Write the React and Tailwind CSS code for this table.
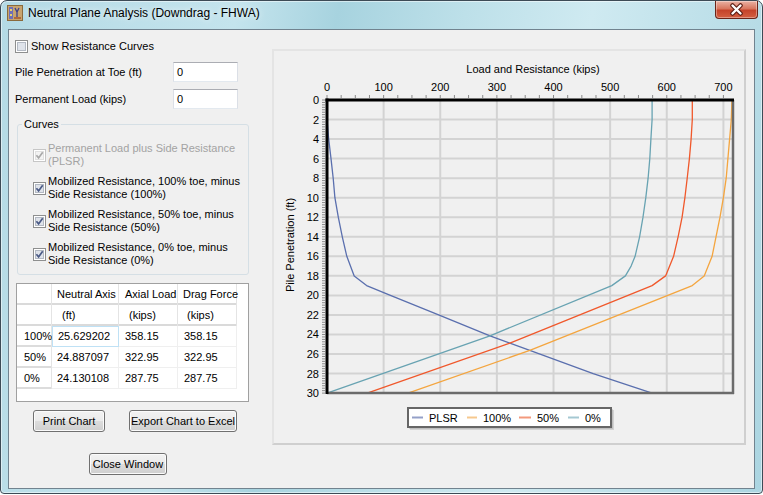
import React from 'react';

// chart helpers: coordinates are relative to the chart panel's inner box
const X = (v) => 53 + v * 0.5663;
const Y = (d) => 49 + d * 9.77;
const toPoints = (arr) => arr.map(([d, v]) => `${X(v).toFixed(1)},${Y(d).toFixed(1)}`).join(' ');

const series = [
  {
    name: 'PLSR',
    color: '#5a6fae',
    data: [[0, 0], [2, 0], [4, 3], [6, 7], [8, 11], [10, 14], [12, 20], [14, 27], [16, 35], [18, 48], [19, 70], [20, 112], [22, 197], [24.13, 287.75], [24.887, 322.95], [25.629, 358.15], [28, 470], [30, 574]],
  },
  {
    name: '100%',
    color: '#f4a53f',
    data: [[0, 715], [2, 714], [4, 711], [6, 708], [8, 705], [10, 700], [12, 694], [14, 687], [16, 680], [18, 666], [19, 645], [25.629, 358.15], [30, 143]],
  },
  {
    name: '50%',
    color: '#f0582b',
    data: [[0, 645], [2, 645], [4, 643], [6, 640], [8, 636], [10, 632], [12, 627], [14, 620], [16, 612], [18, 598], [19, 574], [24.887, 322.95], [30, 71]],
  },
  {
    name: '0%',
    color: '#68a3b2',
    data: [[0, 574], [2, 574], [4, 572], [6, 570], [8, 567], [10, 563], [12, 558], [14, 552], [16, 544], [17, 537], [18, 527], [19, 503], [24.13, 287.75], [30, 0]],
  },
];

const legendItems = [
  { name: 'PLSR', x1: 138, x2: 149, tx: 155, color: '#94a0c8' },
  { name: '100%', x1: 193, x2: 203, tx: 209, color: '#f6c88e' },
  { name: '50%', x1: 245, x2: 257, tx: 263, color: '#f3997c' },
  { name: '0%', x1: 294, x2: 305, tx: 311, color: '#a5c8d2' },
];

const rows = [
  { label: '100%', axis: '25.629202', load: '358.15', drag: '358.15', selected: true },
  { label: '50%', axis: '24.887097', load: '322.95', drag: '322.95' },
  { label: '0%', axis: '24.130108', load: '287.75', drag: '287.75' },
];

const CheckBox = ({ checked, disabled }) => (
  <svg width="13" height="13" viewBox="0 0 13 13" className="shrink-0">
    <rect x="0.5" y="0.5" width="12" height="12" fill="#fff" stroke={disabled ? '#c6c6c6' : '#8e8f8f'} />
    <rect x="2.5" y="2.5" width="8" height="8" fill={disabled ? '#f3f3f3' : '#dfe3ea'} stroke={disabled ? '#e0e0e0' : '#b3b9c3'} />
    {checked && (
      <path d="M3.4 6.2 L5.6 8.9 L9.7 3.3" fill="none" stroke={disabled ? '#a8a8a8' : '#4a5a86'} strokeWidth="1.7" />
    )}
  </svg>
);

const Button = ({ children, className }) => (
  <button
    className={`h-[22px] rounded-[3px] border border-[#707070] bg-[linear-gradient(#f2f2f2_0%,#ebebeb_50%,#dddddd_50%,#cfcfcf_100%)] shadow-[inset_0_0_0_1px_#fbfbfb] text-[11px] leading-[20px] text-black ${className}`}
  >
    {children}
  </button>
);

const AppIcon = () => (
  <svg width="16" height="16" viewBox="0 0 16 16" className="ml-[6px] mt-[4px] shrink-0">
    <rect x="0.5" y="0.5" width="15" height="15" fill="#c8a46e" stroke="#8a6a3c" />
    <rect x="2" y="2" width="4" height="12" fill="#6f6fb8" />
    <rect x="3" y="4" width="2" height="2" fill="#e9d36a" />
    <rect x="3" y="9" width="2" height="2" fill="#e9d36a" />
    <path d="M8 3 L10 7 L12 3 M10 7 L10 13" fill="none" stroke="#3b3f8f" strokeWidth="1.3" />
    <rect x="7" y="12" width="7" height="2" fill="#b06a3a" />
  </svg>
);

const CloseButton = () => (
  <div className="ml-auto mr-[4px] w-[43px] h-[18px] rounded-b-[4px] border border-t-0 border-[#6b2418] bg-[linear-gradient(#eab2a4_0%,#d8775f_45%,#c5432a_55%,#d45f41_100%)] shadow-[inset_0_0_0_1px_rgba(255,255,255,0.35)] flex items-center justify-center">
    <svg width="15" height="13" viewBox="0 0 15 13">
      <path d="M3.5 2.5 L11.5 10.5 M11.5 2.5 L3.5 10.5" stroke="#5a1a10" strokeWidth="4.5" strokeLinecap="round" />
      <path d="M3.5 2.5 L11.5 10.5 M11.5 2.5 L3.5 10.5" stroke="#ffffff" strokeWidth="2.4" strokeLinecap="round" />
    </svg>
  </div>
);

const Chart = () => {
  const gridX = [100, 200, 300, 400, 500, 600, 700];
  const gridY = [2, 4, 6, 8, 10, 12, 14, 16, 18, 20, 22, 24, 26, 28];
  const labelsY = [0, ...gridY, 30];
  const topTicks = Array.from({ length: 29 }, (_, i) => i * 25);
  const leftTicks = Array.from({ length: 121 }, (_, i) => i * 0.25);
  const right = 459;
  const bottom = Y(30);

  return (
    <svg width="470" height="392" viewBox="0 0 470 392" fontFamily="'Liberation Sans', Arial, sans-serif" fontSize="11">
      {/* grid */}
      {gridX.map((v) => (
        <line key={`gx${v}`} x1={X(v)} x2={X(v)} y1={Y(0)} y2={bottom} stroke="#d3d3d3" strokeWidth="2" />
      ))}
      {gridY.map((d) => (
        <line key={`gy${d}`} x1={X(0)} x2={right} y1={Y(d)} y2={Y(d)} stroke="#d3d3d3" strokeWidth="2" />
      ))}

      {/* minor ticks */}
      {topTicks.map((v) => (
        <line key={`tt${v}`} x1={X(v)} x2={X(v)} y1={Y(0) - 5} y2={Y(0) - 2} stroke="#8a8a8a" strokeWidth="1" />
      ))}
      {leftTicks.map((d) => (
        <line key={`lt${d}`} x1={X(0) - 5} x2={X(0) - 2} y1={Y(d)} y2={Y(d)} stroke="#8a8a8a" strokeWidth="1" />
      ))}

      {/* curves */}
      {series.map((s) => (
        <polyline key={s.name} points={toPoints(s.data)} fill="none" stroke={s.color} strokeWidth="1.3" strokeLinejoin="round" />
      ))}

      {/* plot frame */}
      <line x1={X(0)} x2={right + 1} y1={bottom} y2={bottom} stroke="#6b6b6b" strokeWidth="2.5" />
      <line x1={right} x2={right} y1={Y(0)} y2={bottom + 1} stroke="#6b6b6b" strokeWidth="2.5" />
      <line x1={X(0) - 1.5} x2={right + 1} y1={Y(0)} y2={Y(0)} stroke="#000" strokeWidth="3" />
      <line x1={X(0)} x2={X(0)} y1={Y(0) - 1.5} y2={bottom + 1} stroke="#000" strokeWidth="3" />

      {/* axis labels */}
      <text x="259" y="22" textAnchor="middle" fill="#000">Load and Resistance (kips)</text>
      {[0, ...gridX].map((v) => (
        <text key={`lx${v}`} x={X(v)} y="40" textAnchor="middle" fill="#000">{v}</text>
      ))}
      {labelsY.map((d) => (
        <text key={`ly${d}`} x="45" y={Y(d) + 4} textAnchor="end" fill="#000">{d}</text>
      ))}
      <text x="16" y="194" textAnchor="middle" dominantBaseline="central" transform="rotate(-90 16 194)" fill="#000">
        Pile Penetration (ft)
      </text>

      {/* legend */}
      <rect x="136" y="359" width="204" height="20" fill="#b5b5b5" opacity="0.5" />
      <rect x="135" y="358" width="204" height="20" fill="#9a9a9a" opacity="0.35" />
      <rect x="134" y="357" width="203" height="19" fill="#fff" stroke="#666" strokeWidth="2" />
      {legendItems.map((it) => (
        <g key={it.name}>
          <line x1={it.x1} x2={it.x2} y1="366.5" y2="366.5" stroke={it.color} strokeWidth="2" />
          <text x={it.tx} y="370.5" fill="#000">{it.name}</text>
        </g>
      ))}
    </svg>
  );
};

export default function App() {
  return (
    <div className="w-[763px] h-[495px] bg-white font-['Liberation_Sans',Arial,sans-serif] text-[11px] text-black">
      <div className="w-[763px] h-[494px] rounded-t-[7px] rounded-b-[4px] border border-[#3d4b56] bg-[linear-gradient(100deg,#b4dae5_0%,#c4e4ed_28%,#a7d3df_40%,#bde0e9_55%,#cfeaf1_70%,#abd5e1_100%)] shadow-[inset_0_0_0_1px_rgba(255,255,255,0.5)] flex flex-col">
        {/* Title bar */}
        <div className="h-[28px] flex items-start">
          <AppIcon />
          <span className="ml-[5px] mt-[5px] text-[12px] leading-[15px] [text-shadow:0_0_6px_rgba(255,255,255,0.9)]">
            Neutral Plane Analysis (Downdrag - FHWA)
          </span>
          <CloseButton />
        </div>

        {/* Client area */}
        <div className="mx-[7px] h-[460px] border border-[#71838f] bg-[#f0f0f0] flex">
          {/* Left column */}
          <div className="w-[240px] pl-[6px] flex flex-col">
            <div className="mt-[10px] h-[13px] flex items-center gap-[3px]">
              <CheckBox />
              <span>Show Resistance Curves</span>
            </div>

            <div className="mt-[9px] h-[20px] flex items-center">
              <span className="w-[158px]">Pile Penetration at Toe (ft)</span>
              <div className="w-[65px] h-[20px] border border-[#abadb3] border-x-[#dbdfe6] border-b-[#e3e9ef] bg-white pl-[3px] leading-[18px]">0</div>
            </div>
            <div className="mt-[7px] h-[20px] flex items-center">
              <span className="w-[158px]">Permanent Load (kips)</span>
              <div className="w-[65px] h-[20px] border border-[#abadb3] border-x-[#dbdfe6] border-b-[#e3e9ef] bg-white pl-[3px] leading-[18px]">0</div>
            </div>

            <fieldset className="mt-[9px] ml-[2px] w-[232px] h-[157px] border border-[#d5dfe5] rounded-[3px] p-0">
              <legend className="ml-[4px] px-[2px] leading-[13px]">Curves</legend>
              <div className="pt-[11px] pl-[15px] flex flex-col gap-[7px] leading-[13px]">
                <div className="flex items-center gap-[2px] text-[#a3a3a3]">
                  <CheckBox checked disabled />
                  <span className="whitespace-nowrap">Permanent Load plus Side Resistance<br />(PLSR)</span>
                </div>
                <div className="flex items-center gap-[2px]">
                  <CheckBox checked />
                  <span className="whitespace-nowrap">Mobilized Resistance, 100% toe, minus<br />Side Resistance (100%)</span>
                </div>
                <div className="flex items-center gap-[2px]">
                  <CheckBox checked />
                  <span className="whitespace-nowrap">Mobilized Resistance, 50% toe, minus<br />Side Resistance (50%)</span>
                </div>
                <div className="flex items-center gap-[2px]">
                  <CheckBox checked />
                  <span className="whitespace-nowrap">Mobilized Resistance, 0% toe, minus<br />Side Resistance (0%)</span>
                </div>
              </div>
            </fieldset>

            {/* Results grid */}
            <div className="mt-[8px] ml-[1px] w-[233px] h-[119px] border border-[#a0a0a0] bg-white">
              <div className="flex h-[21px]">
                <div className="w-[35px] border-r border-[#e4e4e4] shadow-[inset_0_-2px_0_#dadada]" />
                <div className="w-[67px] pl-[5px] flex items-center border-r border-[#e4e4e4] shadow-[inset_0_-2px_0_#dadada]">Neutral Axis</div>
                <div className="w-[59px] pl-[6px] flex items-center border-r border-[#e4e4e4] shadow-[inset_0_-2px_0_#dadada]">Axial Load</div>
                <div className="w-[59px] pl-[5px] flex items-center border-r border-[#e4e4e4] shadow-[inset_0_-2px_0_#dadada] whitespace-nowrap">Drag Force</div>
              </div>
              <div className="flex h-[21px]">
                <div className="w-[35px] border-r border-[#e4e4e4] shadow-[inset_0_-2px_0_#dadada]" />
                <div className="w-[67px] pl-[10px] flex items-center border-r border-[#e4e4e4] shadow-[inset_0_-2px_0_#dadada]">(ft)</div>
                <div className="w-[59px] pl-[10px] flex items-center border-r border-[#e4e4e4] shadow-[inset_0_-2px_0_#dadada]">(kips)</div>
                <div className="w-[59px] pl-[9px] flex items-center border-r border-[#e4e4e4] shadow-[inset_0_-2px_0_#dadada]">(kips)</div>
              </div>
              {rows.map((r) => (
                <div key={r.label} className="flex h-[21px]">
                  <div className="w-[35px] pl-[7px] flex items-center whitespace-nowrap border-r border-[#e4e4e4] shadow-[inset_0_-2px_0_#dcdcdc]">{r.label}</div>
                  <div className={`w-[67px] pl-[5px] flex items-center border-b border-r ${r.selected ? 'border border-[#bfe1f5]' : 'border-[#efefef]'}`}>{r.axis}</div>
                  <div className="w-[59px] pl-[6px] flex items-center border-b border-r border-[#efefef]">{r.load}</div>
                  <div className="w-[59px] pl-[6px] flex items-center border-b border-r border-[#efefef]">{r.drag}</div>
                </div>
              ))}
            </div>

            <div className="mt-[8px] flex">
              <Button className="ml-[18px] w-[72px]">Print Chart</Button>
              <Button className="ml-[24px] w-[108px] whitespace-nowrap">Export Chart to Excel</Button>
            </div>
            <div className="mt-[21px] flex">
              <Button className="ml-[74px] w-[78px]">Close Window</Button>
            </div>
          </div>

          {/* Chart panel */}
          <div className="ml-[23px] mt-[19px] w-[474px] h-[396px] border-2 border-t-[#e4e4e4] border-l-[#e4e4e4] border-r-[#cfcfcf] border-b-[#cfcfcf]">
            <Chart />
          </div>
        </div>
      </div>
    </div>
  );
}
